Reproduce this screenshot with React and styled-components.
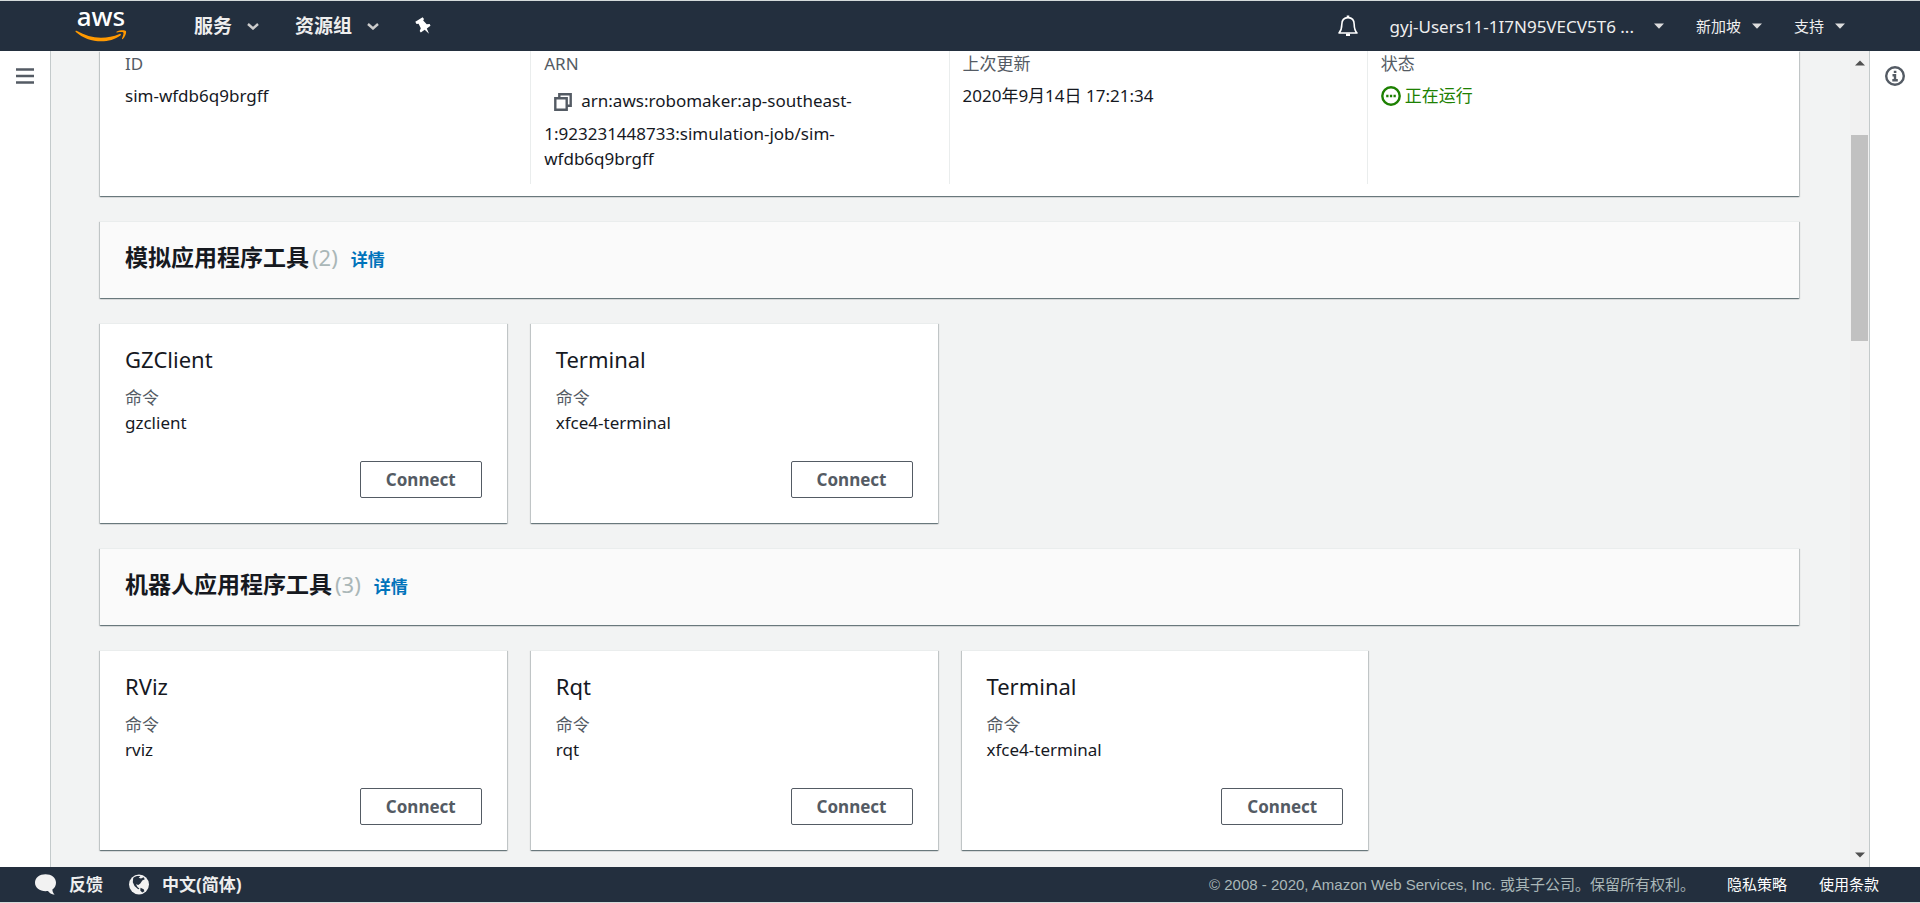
import React, { Component } from "react";
import styled, { createGlobalStyle } from "styled-components";

const simulationTools = [
  { name: "GZClient", command: "gzclient" },
  { name: "Terminal", command: "xfce4-terminal" }
];

const robotTools = [
  { name: "RViz", command: "rviz" },
  { name: "Rqt", command: "rqt" },
  { name: "Terminal", command: "xfce4-terminal" }
];

const Chevron = () => (
  <svg width="12" height="8" viewBox="0 0 12 8" fill="none" stroke="#ccc" strokeWidth="2.4">
    <path d="M1 2 L6 6.500 L11 2" />
  </svg>
);

const Caret = () => (
  <svg width="10" height="6" viewBox="0 0 10 6" fill="#ddd">
    <path d="M0 0.5 H10 L5 5.8 Z" />
  </svg>
);

class Header extends Component {
  render() {
    return (
      <HeaderBar>
        <Logo href="#home">
          aws
          <svg width="52" height="13" viewBox="0 0 52 13" fill="#ff9900">
            <path d="M0.5 1.2 C0.7 0.6 1.3 0.7 2 1.1 C9.500 5.300 17.500 7.700 26 7.700 C32.500 7.700 38.500 6.400 44.500 3.900 C45.700 3.400 46.600 4.600 45.500 5.400 C40.300 9.300 33 11.300 26.500 11.300 C16.500 11.300 7.500 7.800 0.800 1.900 C0.500 1.600 0.400 1.400 0.500 1.200 Z" />
            <path d="M41.500 1.700 C44.500 -0.200 50 -0.200 50.900 0.900 C51.700 2 50.300 6.700 47.800 9.100 C47.300 9.500 46.800 9.200 47 8.600 C47.800 6.600 49 3.300 48.300 2.500 C47.600 1.700 44.200 2.100 42 2.400 C41.200 2.500 41 2 41.500 1.700 Z" />
          </svg>
        </Logo>
        <MainMenus>
          <MenuButton>
            服务 <Chevron />
          </MenuButton>
          <MenuButton>
            资源组 <Chevron />
          </MenuButton>
          <IconButton aria-label="固定">
            <svg width="16" height="18" viewBox="0 0 16 18" fill="#fff">
              <path d="M0.300 4.800 L7.600 0.300 L9 2 L8.200 3.400 L11.700 7.300 L14.700 7.100 L15.500 8.700 L11.800 11.500 L14 16.800 L9.700 12.800 L5.800 15.500 L4.700 14 L5.800 11.200 L3.600 6.800 L1.500 6.900 Z" />
            </svg>
          </IconButton>
        </MainMenus>
        <AccountMenus>
          <IconButton aria-label="通知">
            <svg width="20" height="22" viewBox="0 0 20 22" fill="none" stroke="#fff" strokeWidth="1.600">
              <path d="M1 18 C3.300 15.500 3.800 13.500 3.800 9.500 C3.800 5 6 2.600 10 2.600 C14 2.600 16.200 5 16.200 9.500 C16.200 13.500 16.700 15.500 19 18 Z" strokeLinejoin="round" />
              <path d="M10 0.500 V2.500 M8 19.800 H12" strokeWidth="2.600" />
            </svg>
          </IconButton>
          <AccountButton $wide>
            gyj-Users11-1I7N95VECV5T6 ... <Caret />
          </AccountButton>
          <AccountButton>
            新加坡 <Caret />
          </AccountButton>
          <AccountButton>
            支持 <Caret />
          </AccountButton>
        </AccountMenus>
      </HeaderBar>
    );
  }
}

class ToolSection extends Component {
  render() {
    const { title, tools } = this.props;
    return (
      <React.Fragment>
        <SectionHeader>
          <H2>{title}</H2>
          <Count>({tools.length})</Count>
          <DetailLink href="#details">详情</DetailLink>
        </SectionHeader>
        <ToolGrid>
          {tools.map(tool => (
            <ToolCard key={tool.name}>
              <H3>{tool.name}</H3>
              <Label>命令</Label>
              <Value>{tool.command}</Value>
              <ConnectButton type="button">Connect</ConnectButton>
            </ToolCard>
          ))}
        </ToolGrid>
      </React.Fragment>
    );
  }
}

class App extends Component {
  render() {
    return (
      <Page>
        <GlobalStyle />
        <Header />
        <Body>
          <Rail>
            <IconButton aria-label="菜单">
              <svg width="18" height="16" viewBox="0 0 18 16" stroke="#545b64" strokeWidth="2.500">
                <path d="M0 1.500 H18 M0 8 H18 M0 14.500 H18" />
              </svg>
            </IconButton>
          </Rail>
          <Content>
            <Summary>
              <Column>
                <Label>ID</Label>
                <Value $spaced>sim-wfdb6q9brgff</Value>
              </Column>
              <Column>
                <Label>ARN</Label>
                <Value $spaced>
                  <CopyButton aria-label="复制">
                    <svg width="18" height="18" viewBox="0 0 18 18" fill="none" stroke="#545b64" strokeWidth="2.400">
                      <path d="M1.300 5.300 H12.700 V16.700 H1.300 Z M5.300 5 V1.300 H16.700 V12.700 H13" />
                    </svg>
                  </CopyButton>
                  arn:aws:robomaker:ap-southeast-
                  <wbr />
                  1:923231448733:simulation-job/sim-wfdb6q9brgff
                </Value>
              </Column>
              <Column>
                <Label>上次更新</Label>
                <Value $spaced>2020年9月14日 17:21:34</Value>
              </Column>
              <Column>
                <Label>状态</Label>
                <Status>
                  <svg width="20" height="20" viewBox="0 0 20 20" fill="none" stroke="#1d8102">
                    <circle cx="10" cy="10" r="8.700" strokeWidth="2.400" />
                    <path d="M5.200 10 H7.500 M8.900 10 H11.200 M12.500 10 H14.800" strokeWidth="2.300" />
                  </svg>
                  正在运行
                </Status>
              </Column>
            </Summary>
            <ToolSection title="模拟应用程序工具" tools={simulationTools} />
            <ToolSection title="机器人应用程序工具" tools={robotTools} />
          </Content>
          <Scrollbar>
            <svg width="10" height="6" viewBox="0 0 10 6" fill="#505050">
              <path d="M0 5.500 L5 0.500 L10 5.500 Z" />
            </svg>
            <Track>
              <Thumb />
            </Track>
            <svg width="10" height="6" viewBox="0 0 10 6" fill="#505050">
              <path d="M0 0.500 L5 5.500 L10 0.500 Z" />
            </svg>
          </Scrollbar>
          <Rail $right>
            <IconButton aria-label="信息">
              <svg width="20" height="20" viewBox="0 0 20 20" fill="none" stroke="#545b64">
                <circle cx="10" cy="10" r="8.800" strokeWidth="2.400" />
                <path d="M8.800 5.900 H11.400 M7.500 9.300 H10 V14 M7.300 14.200 H12.800" strokeWidth="2.400" />
              </svg>
            </IconButton>
          </Rail>
        </Body>
        <Footer>
          <FooterButton>
            <svg width="21" height="21" viewBox="0 0 21 21" fill="#f2f2f2">
              <path d="M10.500 0.300 C16.300 0.300 21 3.800 21 8.700 C21 11.600 19.600 14 17.400 15.600 C17.400 17.700 18.200 19.300 19.600 20.800 C16.500 20.300 14.200 19 13 17 C5.500 18 0 13.900 0 8.700 C0 3.800 4.700 0.300 10.500 0.300 Z" />
            </svg>
            反馈
          </FooterButton>
          <FooterButton>
            <svg width="20" height="21" viewBox="0 0 20 21">
              <circle cx="10" cy="10.500" r="10" fill="#f2f2f2" />
              <path d="M4.200 3.900 C6.500 2 9.400 1.500 11.400 2.400 L9.600 3.800 L12 4.500 L14.600 3.300 L15.800 5.200 L13.300 6.500 L11.300 9.500 L9.300 11 L7 10.300 L8.500 13 L10.500 14.800 L9.200 15.200 L5.500 12 L3.800 8.300 Z M11.500 13.800 L14.700 15.300 L15.400 17.300 L13.200 18.400 L11.300 16.500 Z" fill="#232f3e" />
            </svg>
            中文(简体)
          </FooterButton>
          <Copyright>© 2008 - 2020, Amazon Web Services, Inc. 或其子公司。保留所有权利。</Copyright>
          <FooterLink href="#privacy">隐私策略</FooterLink>
          <FooterLink href="#terms">使用条款</FooterLink>
        </Footer>
      </Page>
    );
  }
}

export default App;

const GlobalStyle = createGlobalStyle`
  * {
    box-sizing: border-box;
  }
  body {
    margin: 0;
    color: #16191f;
    font-family: "Noto Sans", "Noto Sans CJK SC", sans-serif;
    font-size: 17px;
    line-height: 25px;
  }
  button {
    padding: 0;
    border: 0;
    background: none;
    color: inherit;
    font: inherit;
    cursor: pointer;
  }
  a {
    text-decoration: none;
  }
  svg {
    flex: none;
    display: block;
  }
`;

const Page = styled.div`
  display: flex;
  flex-direction: column;
  height: 100vh;
`;

const HeaderBar = styled.header`
  flex: none;
  display: flex;
  align-items: center;
  height: 51px;
  padding: 0 75px;
  border-top: 1px solid #d5dbdb;
  background: #232f3e;
  color: #eee;
`;

const Logo = styled.a`
  display: flex;
  flex-direction: column;
  align-items: center;
  gap: 2px;
  width: 52px;
  padding-bottom: 6px;
  color: #fff;
  font-size: 26px;
  font-weight: 500;
  line-height: 24px;
`;

const MainMenus = styled.nav`
  display: flex;
  align-items: center;
  gap: 36px;
  margin-left: 67px;
`;

const MenuButton = styled.button`
  display: flex;
  align-items: center;
  gap: 15px;
  font-size: 19px;
  font-weight: 700;
`;

const IconButton = styled.button`
  display: flex;
`;

const AccountMenus = styled.div`
  display: flex;
  align-items: center;
  gap: 32px;
  margin-left: auto;
`;

const AccountButton = styled.button`
  display: flex;
  align-items: center;
  gap: ${props => (props.$wide ? "20px" : "11px")};
  font-size: ${props => (props.$wide ? "17px" : "15px")};
`;

const Body = styled.div`
  flex: 1;
  display: flex;
  min-height: 0;
`;

const Rail = styled.aside`
  flex: none;
  display: flex;
  justify-content: center;
  align-items: flex-start;
  width: 51px;
  padding-top: ${props => (props.$right ? "15px" : "17px")};
  background: #fff;
  border: solid #c4cacb;
  border-width: ${props => (props.$right ? "0 0 0 1px" : "0 1px 0 0")};
`;

const Content = styled.main`
  flex: 1;
  display: flex;
  flex-direction: column;
  gap: 25px;
  min-width: 0;
  padding: 0 51px 0 49px;
  overflow: hidden;
  background: #f2f3f3;
`;

const Panel = styled.section`
  flex: none;
  background: #fff;
  border-top: 1px solid #eaeded;
  box-shadow: 0 1px 1px 0 rgba(0, 28, 36, 0.4), 1px 1px 1px 0 rgba(0, 28, 36, 0.15),
    -1px 1px 1px 0 rgba(0, 28, 36, 0.15);
`;

const Summary = styled(Panel)`
  display: grid;
  grid-template-columns: repeat(4, 1fr);
  padding: 0 14px 12px 12px;
  border-top: 0;
`;

const Column = styled.div`
  min-height: 133px;
  padding: 0 13px;

  & + & {
    border-left: 1px solid #eaeded;
  }
`;

const Label = styled.div`
  color: #545b64;
`;

const Value = styled.div`
  margin-top: ${props => (props.$spaced ? "7px" : "0")};
`;

const Status = styled(Value)`
  display: flex;
  align-items: center;
  gap: 4px;
  margin-top: 7px;
  color: #1d8102;
`;

const CopyButton = styled.button`
  display: inline-flex;
  align-items: center;
  justify-content: center;
  width: 37px;
  height: 38px;
  vertical-align: middle;
`;

const SectionHeader = styled(Panel)`
  display: flex;
  align-items: baseline;
  height: 77px;
  padding: 20px 25px;
  background: #fafafa;
`;

const H2 = styled.h2`
  margin: 0;
  font-size: 23px;
  line-height: 30px;
`;

const Count = styled.span`
  margin-left: 3px;
  color: #aab7b8;
  font-size: 22px;
`;

const DetailLink = styled.a`
  margin-left: 13px;
  color: #0073bb;
  font-weight: 700;
`;

const ToolGrid = styled.div`
  flex: none;
  display: grid;
  grid-template-columns: repeat(4, 1fr);
  gap: 24px;
`;

const ToolCard = styled(Panel)`
  display: flex;
  flex-direction: column;
  height: 200px;
  padding: 20px 25px 25px;
`;

const H3 = styled.h3`
  margin: 0 0 11px;
  font-size: 22px;
  font-weight: 400;
  line-height: 30px;
`;

const ConnectButton = styled.button`
  align-self: flex-end;
  margin-top: auto;
  padding: 5px 25px;
  border: 1px solid #545b64;
  border-radius: 2px;
  color: #545b64;
  font-weight: 700;
`;

const Scrollbar = styled.div`
  flex: none;
  display: flex;
  flex-direction: column;
  align-items: center;
  gap: 7px;
  width: 19px;
  padding: 9px 1px;
  background: #f1f1f1;
`;

const Track = styled.div`
  flex: 1;
  width: 100%;
  padding-top: 62px;
`;

const Thumb = styled.div`
  height: 29%;
  background: #c1c1c1;
`;

const Footer = styled.footer`
  flex: none;
  display: flex;
  align-items: center;
  height: 36px;
  padding: 0 41px 0 35px;
  border-bottom: 1px solid #d5dbdb;
  background: #232f3e;
  color: #eee;
`;

const FooterButton = styled.button`
  display: flex;
  align-items: center;
  gap: 13px;
  margin-right: 26px;
  font-weight: 700;
`;

const Copyright = styled.span`
  margin-left: auto;
  color: #aab7b8;
  font-family: "Liberation Sans", "Noto Sans CJK SC", sans-serif;
  font-size: 15px;
`;

const FooterLink = styled.a`
  margin-left: 32px;
  color: #fff;
  font-size: 15px;
`;
